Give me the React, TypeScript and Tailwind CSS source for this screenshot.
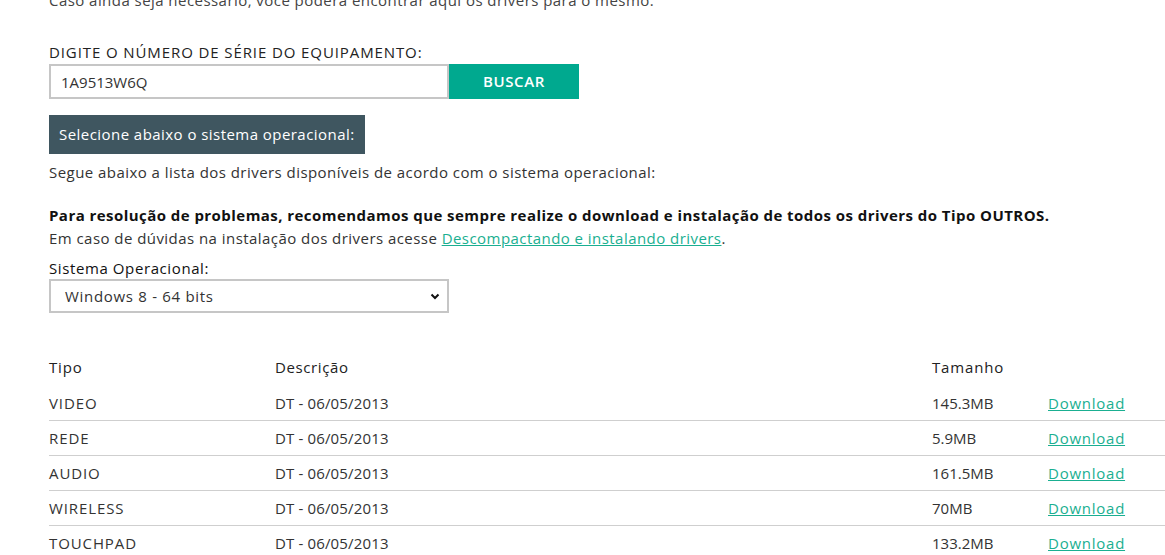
import React from "react";

const rows = [
  { tipo: "VIDEO", desc: "DT - 06/05/2013", size: "145.3MB" },
  { tipo: "REDE", desc: "DT - 06/05/2013", size: "5.9MB" },
  { tipo: "AUDIO", desc: "DT - 06/05/2013", size: "161.5MB" },
  { tipo: "WIRELESS", desc: "DT - 06/05/2013", size: "70MB" },
  { tipo: "TOUCHPAD", desc: "DT - 06/05/2013", size: "133.2MB" },
];

export default function App() {
  return (
    <div className="h-[555px] overflow-hidden bg-white font-['Open_Sans',sans-serif] text-[15px] tracking-[0.45px] text-[#333333]">
      <div className="pl-[49px]">
        <p className="mt-[-10px] leading-[20px] text-[#444]">
          Caso ainda seja necessário, você poderá encontrar aqui os drivers para o mesmo.
        </p>
        <p className="mt-[32px] leading-[20px] tracking-[0.9px] text-[#222]">DIGITE O NÚMERO DE SÉRIE DO EQUIPAMENTO:</p>
        <div className="mt-[2px] flex h-[35px]">
          <input
            defaultValue="1A9513W6Q"
            className="h-[35px] w-[400px] border-2 border-[#c6c6c6] px-[10px] text-[15px] tracking-normal text-[#333] outline-none"
          />
          <button className="h-[35px] w-[130px] bg-[#00a98f] text-[15px] font-semibold tracking-[0.6px] text-white">
            BUSCAR
          </button>
        </div>
        <div className="mt-[16px] inline-flex h-[39px] items-center bg-[#3f5660] px-[10px] text-[15px] text-white">
          Selecione abaixo o sistema operacional:
        </div>
        <p className="mt-[8px] leading-[20px]">
          Segue abaixo a lista dos drivers disponíveis de acordo com o sistema operacional:
        </p>
        <p className="mt-[23px] font-bold leading-[20px] text-[#111]">
          Para resolução de problemas, recomendamos que sempre realize o download e instalação de todos os drivers do Tipo OUTROS.
        </p>
        <p className="mt-[3px] leading-[20px]">
          Em caso de dúvidas na instalação dos drivers acesse{" "}
          <a href="#" className="text-[#1aaf91] underline">
            Descompactando e instalando drivers
          </a>
          .
        </p>
        <p className="mt-[10px] leading-[20px] tracking-[0.6px] text-[#111]">Sistema Operacional:</p>
        <div className="mt-[1px] flex h-[34px] w-[400px] items-center justify-between border-2 border-[#c6c6c6] pl-[14px] pr-[6px]">
          <span className="tracking-[0.7px]">Windows 8 - 64 bits</span>
          <svg width="12" height="12" viewBox="0 0 12 12">
            <path d="M2.5 4.5 L6 8 L9.5 4.5" fill="none" stroke="#111" strokeWidth="2" />
          </svg>
        </div>
        <div className="mt-[36px]">
          <div className="grid h-[37px] grid-cols-[226px_657px_116px_1fr] items-center text-[#222]">
            <span className="tracking-[0.8px]">Tipo</span>
            <span className="tracking-[0.6px]">Descrição</span>
            <span className="tracking-[0.85px]">Tamanho</span>
            <span></span>
          </div>
          {rows.map((r) => (
            <div
              key={r.tipo}
              className="grid h-[35px] grid-cols-[226px_657px_116px_1fr] items-center border-b border-[#cfcfcf]"
            >
              <span className="tracking-[0.9px]">{r.tipo}</span>
              <span className="tracking-[0.15px]">{r.desc}</span>
              <span className="tracking-normal">{r.size}</span>
              <a href="#" className="tracking-[0.75px] text-[#1aaf91] underline">
                Download
              </a>
            </div>
          ))}
        </div>
      </div>
    </div>
  );
}
